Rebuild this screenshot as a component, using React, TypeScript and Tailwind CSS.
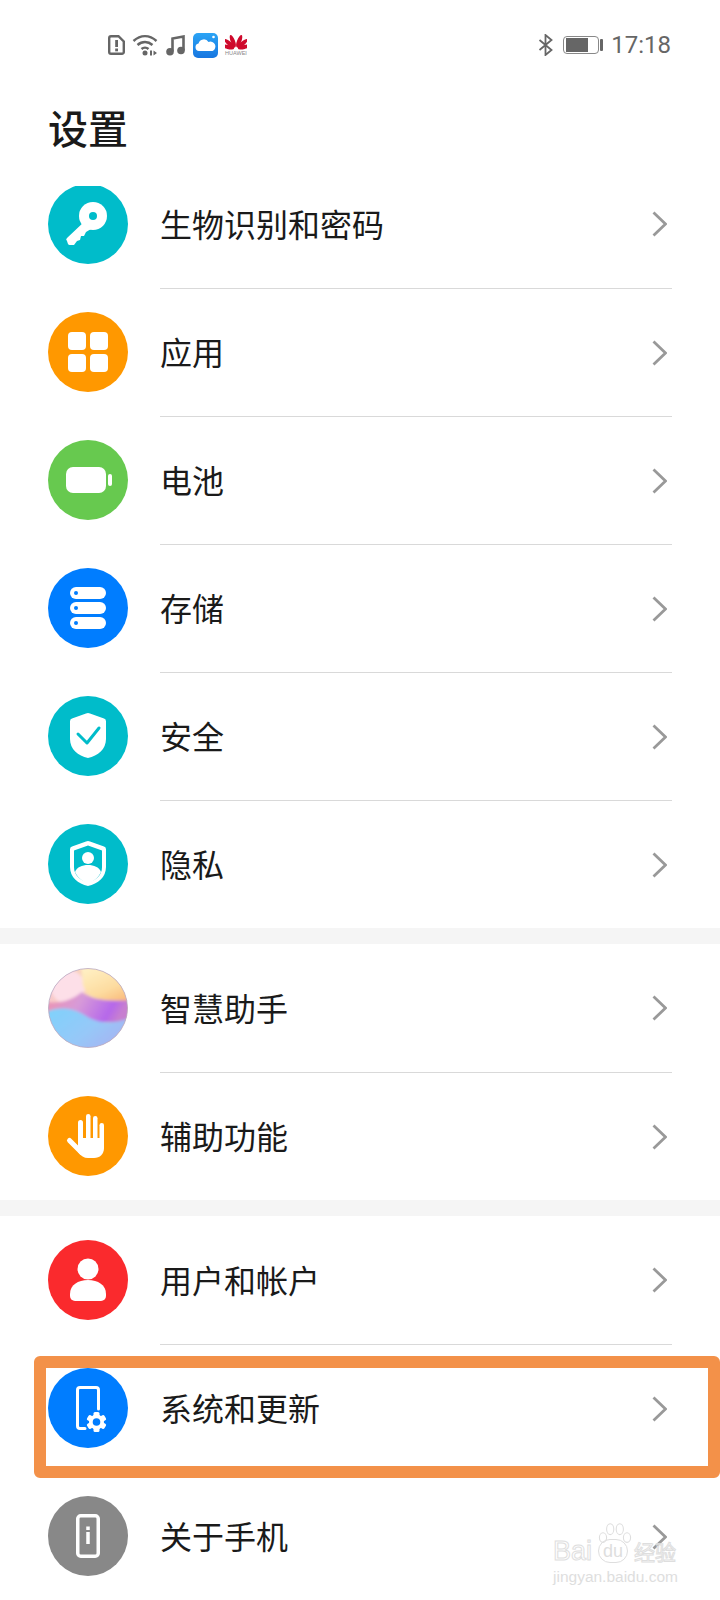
import React from "react";

const cjk = { fontFamily: '"Noto Sans CJK SC", sans-serif' };

function KeyIcon() {
    return (
        <svg viewBox="0 0 80 80" className="w-20 h-20">
            <circle cx="40" cy="40" r="40" fill="#00bcca" />
            <circle cx="45" cy="32" r="14" fill="#fff" />
            <path d="M37 37L19 54a2 2 0 0 0 0 3l1 3a2 2 0 0 0 2 1h4l3-4 3-1 1-4 3 0 2-4 5-3z" fill="#fff" />
            <circle cx="45" cy="32" r="4" fill="#00bcca" />
        </svg>
    );
}

function AppsIcon() {
    return (
        <svg viewBox="0 0 80 80" className="w-20 h-20">
            <circle cx="40" cy="40" r="40" fill="#ff9800" />
            <rect x="20" y="20" width="18" height="18" rx="4" fill="#fff" />
            <rect x="42" y="20" width="18" height="18" rx="4" fill="#fff" />
            <rect x="20" y="42" width="18" height="18" rx="4" fill="#fff" />
            <rect x="42" y="42" width="18" height="18" rx="4" fill="#fff" />
        </svg>
    );
}

function BatteryIcon() {
    return (
        <svg viewBox="0 0 80 80" className="w-20 h-20">
            <circle cx="40" cy="40" r="40" fill="#67c94f" />
            <rect x="18" y="27" width="40" height="26" rx="7" fill="#fff" />
            <rect x="60" y="34" width="4" height="12" rx="2" fill="#fff" />
        </svg>
    );
}

function StorageIcon() {
    return (
        <svg viewBox="0 0 80 80" className="w-20 h-20">
            <circle cx="40" cy="40" r="40" fill="#007dff" />
            {[19, 34, 49].map((y) => (
                <g key={y}>
                    <rect x="22" y={y} width="36" height="12" rx="6" fill="#fff" />
                    <circle cx="28" cy={y + 6} r="2" fill="#007dff" />
                </g>
            ))}
        </svg>
    );
}

const SHIELD = "M38 17.500a5 5 0 0 1 4 0l14 5a3 3 0 0 1 2 3V43c0 10-8 17-18 19-10-2-18-9-18-19V25.500a3 3 0 0 1 2-3z";

function ShieldCheckIcon() {
    return (
        <svg viewBox="0 0 80 80" className="w-20 h-20">
            <circle cx="40" cy="40" r="40" fill="#00bcca" />
            <path d={SHIELD} fill="#fff" />
            <path d="M30 38l9 9 12-15" fill="none" stroke="#00bcca" strokeWidth="3" strokeLinecap="round" strokeLinejoin="round" />
        </svg>
    );
}

function PrivacyIcon() {
    return (
        <svg viewBox="0 0 80 80" className="w-20 h-20">
            <circle cx="40" cy="40" r="40" fill="#00bcca" />
            <path d={SHIELD} fill="#fff" />
            <path d="M40 21.500l14 5V43c0 8-6 13.500-14 15.500-8-2-14-7.500-14-15.500V26.500z" fill="#00bcca" />
            <circle cx="40" cy="34" r="6" fill="#fff" />
            <path d="M27 48c2-5 7-7 13-7s11 2 13 7c-2 5-7 9-13 12-6-3-11-7-13-12z" fill="#fff" />
        </svg>
    );
}

function AssistantIcon() {
    return (
        <svg viewBox="0 0 80 80" className="w-20 h-20">
            <defs>
                <clipPath id="orb">
                    <circle cx="40" cy="40" r="39.500" />
                </clipPath>
                <filter id="soft">
                    <feGaussianBlur stdDeviation="1.800" />
                </filter>
                <linearGradient id="orbBase" x1="0" y1="0" x2="1" y2="0.3">
                    <stop offset="0" stopColor="#f7c6d4" />
                    <stop offset="0.6" stopColor="#fbd9b0" />
                    <stop offset="1" stopColor="#fcc78a" />
                </linearGradient>
                <linearGradient id="orbCream" x1="0.2" y1="0" x2="0.8" y2="1">
                    <stop offset="0" stopColor="#fff0c4" />
                    <stop offset="0.6" stopColor="#fddca0" />
                    <stop offset="1" stopColor="#fab878" />
                </linearGradient>
                <linearGradient id="orbBand" x1="0" y1="0" x2="1" y2="0.2">
                    <stop offset="0" stopColor="#ee93ad" />
                    <stop offset="0.45" stopColor="#d79ad8" />
                    <stop offset="0.85" stopColor="#b568ea" />
                    <stop offset="1" stopColor="#c77fd0" />
                </linearGradient>
                <linearGradient id="orbBlue" x1="0" y1="0" x2="1" y2="0.6">
                    <stop offset="0" stopColor="#7ed2fb" />
                    <stop offset="0.6" stopColor="#96c8f8" />
                    <stop offset="1" stopColor="#a6b4f2" />
                </linearGradient>
            </defs>
            <g clipPath="url(#orb)">
                <rect width="80" height="80" fill="url(#orbBase)" />
                <g filter="url(#soft)">
                    <circle cx="20" cy="19" r="17" fill="#fddfe8" />
                    <path d="M33 -2h50v36c-16 4-38 2-48-16z" fill="url(#orbCream)" />
                    <path d="M-2 34c14 2 26-2 36-10 10 8 28 10 48 8v22H-2z" fill="url(#orbBand)" />
                    <path d="M-2 44c14-6 28-4 40 4s28 8 44 2v32H-2z" fill="url(#orbBlue)" />
                </g>
            </g>
            <circle cx="40" cy="40" r="39.500" fill="none" stroke="#b9a9c4" strokeWidth="0.8" />
        </svg>
    );
}

function HandIcon() {
    return (
        <svg viewBox="0 0 80 80" className="w-20 h-20">
            <circle cx="40" cy="40" r="40" fill="#ff9800" />
            <rect x="30" y="24" width="5" height="26" rx="2.500" fill="#fff" />
            <rect x="38" y="18" width="4.500" height="30" rx="2.250" fill="#fff" />
            <rect x="45" y="20" width="4.500" height="30" rx="2.250" fill="#fff" />
            <rect x="51.500" y="27" width="4.500" height="24" rx="2.250" fill="#fff" />
            <path d="M30 42h26v10c0 6-4 10-10 10h-6c-4 0-7-2-10-6z" fill="#fff" />
            <path d="M21.500 44.500L33 56" fill="none" stroke="#fff" strokeWidth="5" strokeLinecap="round" />
        </svg>
    );
}

function UserIcon() {
    return (
        <svg viewBox="0 0 80 80" className="w-20 h-20">
            <circle cx="40" cy="40" r="40" fill="#fa2a2d" />
            <circle cx="40" cy="29" r="10.500" fill="#fff" />
            <path d="M22 54v2a5 5 0 0 0 5 5h26a5 5 0 0 0 5-5v-2c0-9-8-14-18-14s-18 5-18 14z" fill="#fff" />
        </svg>
    );
}

function SystemIcon() {
    return (
        <svg viewBox="0 0 80 80" className="w-20 h-20">
            <circle cx="40" cy="40" r="40" fill="#007dff" />
            <path d="M37 60.500h-5a2.500 2.500 0 0 1-2.500-2.500V22a2.500 2.500 0 0 1 2.500-2.500h16a2.500 2.500 0 0 1 2.500 2.500v19" fill="none" stroke="#fff" strokeWidth="3" strokeLinecap="round" />
            <g fill="#fff">
                {[0, 60, 120].map((a) => (
                    <rect key={a} x="45.500" y="44" width="6" height="20" rx="1.500" transform={`rotate(${a} 48.500 54)`} />
                ))}
                <circle cx="48.500" cy="54" r="7.500" />
            </g>
            <circle cx="48.500" cy="54" r="3.800" fill="#007dff" />
        </svg>
    );
}

function AboutIcon() {
    return (
        <svg viewBox="0 0 80 80" className="w-20 h-20">
            <circle cx="40" cy="40" r="40" fill="#888888" />
            <rect x="29.750" y="19.750" width="20.500" height="40.500" rx="3" fill="none" stroke="#fff" strokeWidth="3.500" />
            <rect x="38.250" y="30.500" width="3.500" height="3.500" fill="#fff" />
            <rect x="38.250" y="36" width="3.500" height="12" fill="#fff" />
        </svg>
    );
}

function Row({ icon, label, divider = true }: { icon: React.ReactNode; label: string; divider?: boolean }) {
    return (
        <div className="flex items-center h-32 pl-12">
            <div className="w-20 h-20 shrink-0">{icon}</div>
            <div className={`flex items-center flex-1 h-full ml-8 mr-12 ${divider ? "border-t border-[#d9d9d9]" : ""}`}>
                <span className="flex-1 pb-[3px] text-[32px] text-[#1a1a1a]" style={cjk}>{label}</span>
                <svg viewBox="0 0 15 26" className="w-[15px] h-[26px] mr-[5px]">
                    <path d="M1.500 1.500L13.500 13 1.500 24.500" fill="none" stroke="#999999" strokeWidth="2.800" />
                </svg>
            </div>
        </div>
    );
}

function StatusBar() {
    return (
        <div className="flex items-center justify-between h-[90px] pl-[108px] pr-[49px] text-[#666666]">
            <div className="flex items-center">
                <svg viewBox="0 0 17 20" className="w-[17px] h-5 mr-[7px]">
                    <path d="M3 1.200h7.500l5.300 5.300V17A1.800 1.800 0 0 1 14 18.800H3A1.800 1.800 0 0 1 1.200 17V3A1.800 1.800 0 0 1 3 1.200z" fill="none" stroke="#666" strokeWidth="2.400" />
                    <rect x="7.200" y="5" width="2.800" height="7" fill="#666" />
                    <rect x="7.200" y="13.500" width="2.800" height="2.800" fill="#666" />
                </svg>
                <svg viewBox="0 0 26 22" className="w-[26px] h-[22px] mr-2">
                    <path d="M1.500 7c7-6.500 16-6.500 23 0M5.500 11c4.500-4 10.500-4 15 0M9.500 15c2-1.800 5-1.800 7 0" fill="none" stroke="#666" strokeWidth="2.400" />
                    <circle cx="13" cy="19" r="2.500" fill="#666" />
                    <path d="M18 16.500h2v5h-2zM21.500 16.500l3.500 2.500-3.500 2.500z" fill="#666" />
                </svg>
                <svg viewBox="0 0 19 21" className="w-[19px] h-[21px] mr-2">
                    <path d="M6.500 16.500V3.500l11-2v14" fill="none" stroke="#666" strokeWidth="2.600" />
                    <circle cx="4" cy="16.800" r="3.800" fill="#666" />
                    <circle cx="15" cy="15.500" r="3.800" fill="#666" />
                </svg>
                <svg viewBox="0 0 25 25" className="w-[25px] h-[25px] mr-[7px]">
                    <defs>
                        <linearGradient id="cloudBg" x1="0" y1="0" x2="0" y2="1">
                            <stop offset="0" stopColor="#2ba4f5" />
                            <stop offset="1" stopColor="#1776e0" />
                        </linearGradient>
                    </defs>
                    <rect width="25" height="25" rx="5" fill="url(#cloudBg)" />
                    <path d="M6 18a3.800 3.800 0 0 1-.500-7.500 5.500 5.500 0 0 1 10-1.500 4.500 4.500 0 0 1 4 9z" fill="#fff" />
                    <circle cx="20.500" cy="4" r="1.300" fill="#fff" />
                </svg>
                <div className="flex flex-col items-center w-[22px]">
                    <svg viewBox="0 0 22 16" className="w-[22px] h-4">
                        {[-76, -50, -22, 22, 50, 76].map((a) => (
                            <ellipse key={a} cx="11" cy="6.500" rx="2.100" ry="6.500" fill="#cf0a2c" transform={`rotate(${a} 11 15)`} />
                        ))}
                    </svg>
                    <span className="text-[5.500px] leading-[7px] text-[#888888]" style={{ fontFamily: '"Liberation Sans", sans-serif' }}>HUAWEI</span>
                </div>
            </div>
            <div className="flex items-center">
                <svg viewBox="0 0 15 22" className="w-[15px] h-[22px] mr-[10px]">
                    <path d="M1.500 6l12 10-6 5V1l6 5-12 10" fill="none" stroke="#666" strokeWidth="1.800" />
                </svg>
                <div className="w-9 h-[18px] rounded-[4px] border border-[#888888] py-[1px] px-[2px] mr-[1px]">
                    <div className="w-[22px] h-full bg-[#666666]" />
                </div>
                <div className="w-[3px] h-3 rounded-[1px] bg-[#666666] mr-2" />
                <span className="text-[24px] leading-none" style={{ fontFamily: 'Roboto, sans-serif' }}>17:18</span>
            </div>
        </div>
    );
}

function Watermark() {
    return (
        <div className="absolute left-[553px] top-[1522px] w-[130px] flex flex-col text-[#dedede]" style={{ fontFamily: '"Liberation Sans", sans-serif' }}>
            <svg viewBox="0 0 30 20" className="absolute left-[44px] top-0 w-[36px] h-6">
                <g fill="none" stroke="#dedede" strokeWidth="0.9">
                    <ellipse cx="5" cy="13" rx="3" ry="4" />
                    <ellipse cx="11" cy="6" rx="3" ry="4.500" />
                    <ellipse cx="19" cy="6" rx="3" ry="4.500" />
                    <ellipse cx="25" cy="13" rx="3" ry="4" />
                </g>
            </svg>
            <div className="flex items-center h-[40px] pt-[18px]">
                <span className="text-[27px] leading-none text-transparent [-webkit-text-stroke:1px_#dedede] w-[45px]">Bai</span>
                <span className="flex items-center justify-center w-[30px] h-[24px] rounded-full border border-[#dedede] text-[18px] leading-none">du</span>
                <span className="ml-[6px] text-[21px] leading-none text-transparent [-webkit-text-stroke:1px_#dedede]" style={cjk}>经验</span>
            </div>
            <span className="mt-[7px] text-[15.500px] leading-none whitespace-nowrap">jingyan.baidu.com</span>
        </div>
    );
}

export default function App() {
    return (
        <div className="relative w-[720px] h-[1600px] overflow-hidden bg-white">
            <StatusBar />
            <h1 className="h-[96px] pl-12 text-[40px] leading-[74px] font-medium text-[#1a1a1a]" style={cjk}>设置</h1>
            <div className="h-[1414px] overflow-hidden">
                <div className="-mt-[26px]">
                    <Row icon={<KeyIcon />} label="生物识别和密码" divider={false} />
                    <Row icon={<AppsIcon />} label="应用" />
                    <Row icon={<BatteryIcon />} label="电池" />
                    <Row icon={<StorageIcon />} label="存储" />
                    <Row icon={<ShieldCheckIcon />} label="安全" />
                    <Row icon={<PrivacyIcon />} label="隐私" />
                    <div className="h-4 bg-[#f5f5f5]" />
                    <Row icon={<AssistantIcon />} label="智慧助手" divider={false} />
                    <Row icon={<HandIcon />} label="辅助功能" />
                    <div className="h-4 bg-[#f5f5f5]" />
                    <Row icon={<UserIcon />} label="用户和帐户" divider={false} />
                    <Row icon={<SystemIcon />} label="系统和更新" />
                    <Row icon={<AboutIcon />} label="关于手机" />
                </div>
            </div>
            {/* annotation box drawn over the screenshot */}
            <div className="absolute left-[34px] top-[1356px] w-[686px] h-[122px] border-[12px] border-[#f39149] rounded-[6px]" />
            <Watermark />
        </div>
    );
}
